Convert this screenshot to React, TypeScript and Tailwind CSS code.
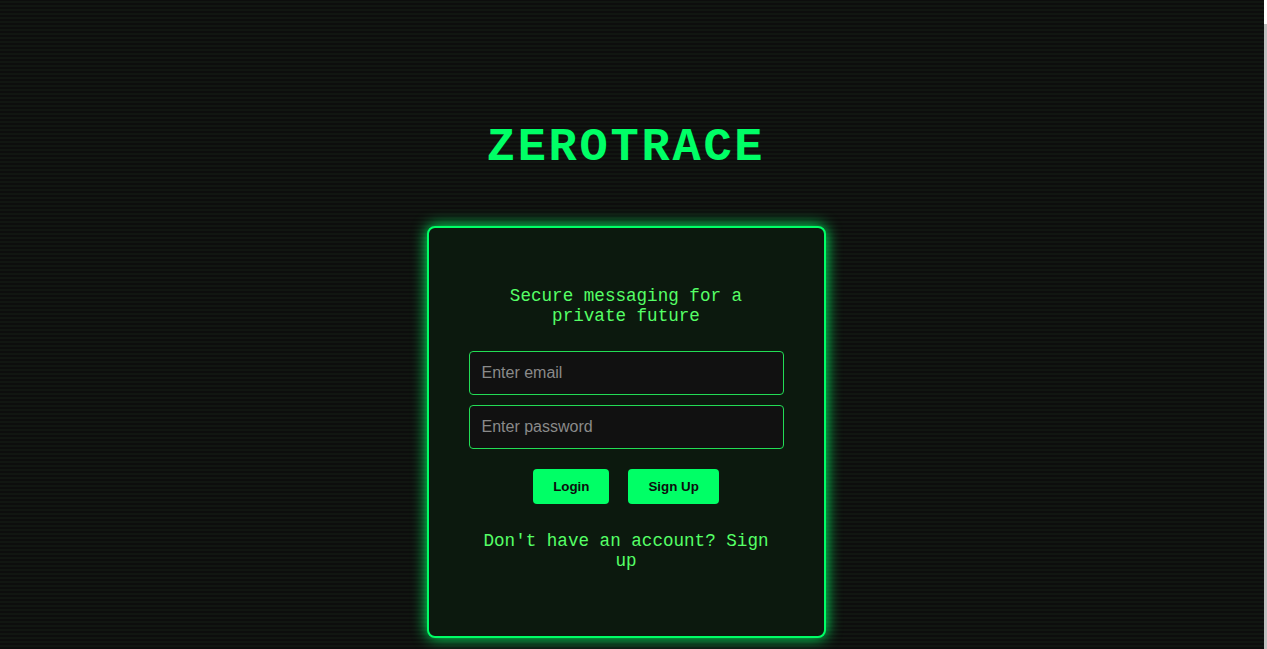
import { useState } from "react";

const App = () => {
  const [email, setEmail] = useState("");
  const [password, setPassword] = useState("");

  return (
    <div className="relative min-h-[649px] overflow-hidden bg-[#0d0d0d] bg-[repeating-linear-gradient(0deg,#0d0d0d_0px,#0d0d0d_2px,#111611_2px,#111611_4px)] font-['Liberation_Mono',monospace]">
      <div className="mr-[15px] flex flex-col items-center pt-[121px]">
        <h1 className="text-[47px] leading-[54px] font-bold tracking-[2.75px] text-[#00ff66]">
          ZEROTRACE
        </h1>

        {/* Login card */}
        <div className="mt-[51px] w-[399px] rounded-lg border-2 border-[#00ff66] bg-[#0c190e] p-10 shadow-[0_0_15px_#00ff66] text-center">
          <p className="mt-[18px] mb-[25px] text-[17.6px] leading-[20px] text-[#55ff66]">
            Secure messaging for a private future
          </p>

          <div className="flex flex-col gap-[10px]">
            <input
              type="email"
              value={email}
              onChange={(e) => setEmail(e.target.value)}
              placeholder="Enter email"
              className="h-[44px] w-full rounded border border-[#22dd55] bg-[#111111] px-3 font-['Liberation_Sans',Arial,sans-serif] text-base text-[#00ff66] placeholder:text-[#8a8a8a] outline-none"
            />
            <input
              type="password"
              value={password}
              onChange={(e) => setPassword(e.target.value)}
              placeholder="Enter password"
              className="h-[44px] w-full rounded border border-[#22dd55] bg-[#111111] px-3 font-['Liberation_Sans',Arial,sans-serif] text-base text-[#00ff66] placeholder:text-[#8a8a8a] outline-none"
            />
          </div>

          <div className="mt-[20px] flex justify-center gap-[19px]">
            <button className="h-[35px] rounded bg-[#00ff66] px-5 font-['Liberation_Sans',Arial,sans-serif] text-[13.33px] font-bold text-[#0d0d0d]">
              Login
            </button>
            <button className="h-[35px] rounded bg-[#00ff66] px-5 font-['Liberation_Sans',Arial,sans-serif] text-[13.33px] font-bold text-[#0d0d0d]">
              Sign Up
            </button>
          </div>

          <p className="mt-[27px] mb-[25px] text-[17.6px] leading-[20px] text-[#55ff66]">
            Don't have an account? Sign up
          </p>
        </div>
      </div>

      {/* thin scrollbar strip */}
      <div className="absolute right-0 top-0 h-full w-[3px] bg-white">
        <div className="mt-[24px] h-[625px] w-full bg-[#c1c1c1]" />
      </div>
    </div>
  );
};

export default App;
